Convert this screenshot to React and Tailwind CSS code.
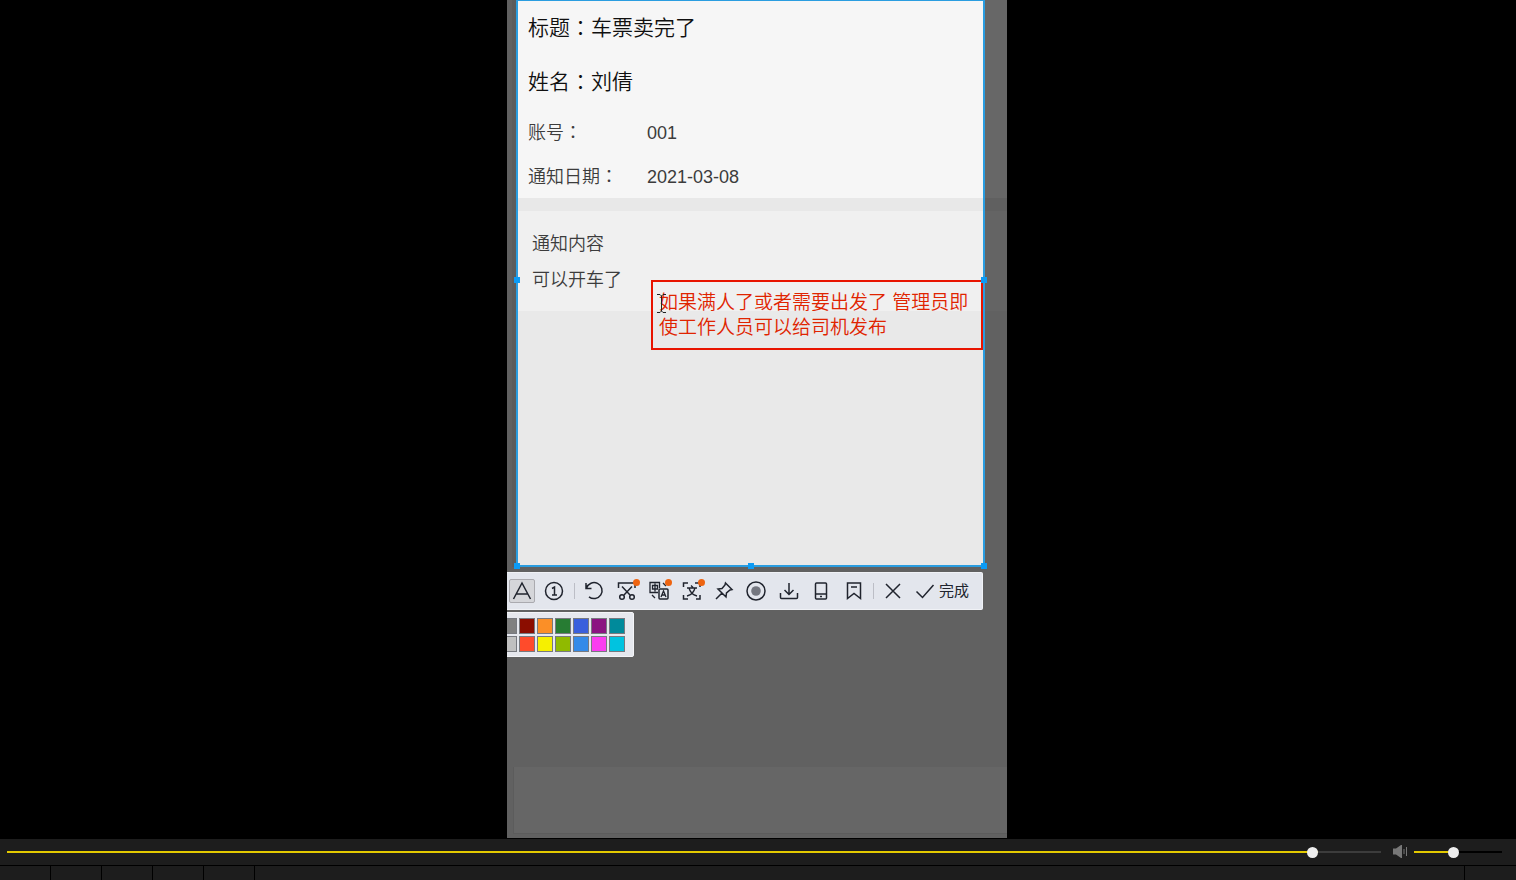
import React, { useState } from 'react';

const SWATCH_ROWS = [
  [
    ['Gray', 'bg-[#808080]'],
    ['Dark red', 'bg-[#8b0d00]'],
    ['Orange', 'bg-[#fb8f27]'],
    ['Green', 'bg-[#277c33]'],
    ['Blue', 'bg-[#3a5fdc]'],
    ['Purple', 'bg-[#8b1481]'],
    ['Teal', 'bg-[#008a9b]'],
  ],
  [
    ['Silver', 'bg-[#c0c0c0]'],
    ['Red', 'bg-[#ff4b2b]'],
    ['Yellow', 'bg-[#f6f000]'],
    ['Lime', 'bg-[#90ba00]'],
    ['Sky', 'bg-[#348ae8]'],
    ['Pink', 'bg-[#fa3df0]'],
    ['Cyan', 'bg-[#00c3e0]'],
  ],
];

const Icon = ({ children }) => (
  <svg
    width="20"
    height="20"
    viewBox="0 0 20 20"
    fill="none"
    stroke="#20242e"
    strokeWidth="1.5"
    aria-hidden="true"
  >
    {children}
  </svg>
);

const IconText = () => (
  <Icon>
    <path d="M1.5 18 10 2l8.500 16M4.500 13h11" />
  </Icon>
);

const IconNumber = () => (
  <Icon>
    <circle cx="10" cy="10" r="8.5" />
    <path d="M8 7.5 10.5 6v8M8 14h5" />
  </Icon>
);

const IconUndo = () => (
  <Icon>
    <path d="M2 2v5.5h5.5M2.5 7A8 8 0 1 1 5 15.8" />
  </Icon>
);

const IconScissors = () => (
  <Icon>
    <path d="M1.500 7V2H18v5M5 5.500 13 14M15 5.500 7 14" />
    <circle cx="5" cy="16" r="2.3" />
    <circle cx="15" cy="16" r="2.3" />
  </Icon>
);

const IconTranslate = () => (
  <Icon>
    <path d="M9 11.500H1V1.500h9.500V7M3.500 4.500h5v3.500h-5zM6 2.500v8" strokeWidth="1.3" />
    <rect x="10" y="8" width="9" height="10" rx="1" />
    <path d="m12 16 2.500-6 2.500 6M13 14h3M14 2l3 3M3 14l3 3" strokeWidth="1.3" />
  </Icon>
);

const IconRecognize = () => (
  <Icon>
    <path d="M1.500 6V2H6M13 2h5v4M1.500 14v4H6M14 18h4v-4" />
    <path d="M5 7h10M9 4.500l2 2M13 7c-1 4-4 7-8 8M7 7c1 4 4 7 8 8" strokeWidth="1.3" />
  </Icon>
);

const IconPin = () => (
  <Icon>
    <path d="m11.500 2 6.500 6.500-2 .5-3.500 3-.5 4L4 8l4-.500L11 4zM8 12l-6 6" />
  </Icon>
);

const IconRecord = () => (
  <Icon>
    <circle cx="10" cy="10" r="9" />
    <circle cx="10" cy="10" r="4.800" fill="#747780" stroke="none" />
  </Icon>
);

const IconDownload = () => (
  <Icon>
    <path d="M10 2v11.500M5.500 9l4.500 4.500L14.500 9M1.500 12v4.500q0 1 1 1h15q1 0 1-1V12" />
  </Icon>
);

const IconPhone = () => (
  <Icon>
    <rect x="4.500" y="2" width="11" height="16" rx="1" />
    <path d="M4.500 13h11M9 15.500h2" />
  </Icon>
);

const IconBookmark = () => (
  <Icon>
    <path d="M3.500 2h13v15.500L10 12.500l-6.500 5zM7 6h6" />
  </Icon>
);

const IconClose = () => (
  <Icon>
    <path d="m3 3 14 14M17 3 3 17" />
  </Icon>
);

const IconCheck = () => (
  <Icon>
    <path d="m1.500 10.500 6 6L18.500 4" />
  </Icon>
);

const IconVolume = () => (
  <svg width="15" height="14" viewBox="0 0 15 14" fill="#777777" aria-hidden="true">
    <path d="M0 3.500h3L8 0h1v13H8L3 9.500H0zM10.500 4h1v5h-1zM13 2h1v9h-1z" />
  </svg>
);

const ToolButton = ({ label, icon: ToolIcon, active, badge }) => (
  <button
    type="button"
    aria-label={label}
    className={
      active
        ? 'relative flex h-6 w-[26px] items-center justify-center rounded-xs border border-[#aaaaaf] bg-[#d5d6da]'
        : 'relative flex h-6 w-[26px] items-center justify-center'
    }
  >
    <ToolIcon />
    {badge && <span className="absolute right-0 top-0 size-[7px] rounded-full bg-[#ee6410]" />}
  </button>
);

const Divider = () => <span className="h-4 w-px bg-[#bcbec6]" />;

const Handle = ({ className }) => (
  <span className={`absolute size-1.5 bg-[#0c9bf5] ${className}`} />
);

// Full-width colon that sits in the middle of its cell
const Colon = () => <span className="font-['Noto_Sans_CJK_TC',sans-serif] leading-none">：</span>;

const Slider = ({ label, value, onChange, className, rest }) => (
  <input
    type="range"
    aria-label={label}
    min="0"
    max="1000"
    value={value}
    onChange={(e) => onChange(Number(e.target.value))}
    style={{
      backgroundImage: `linear-gradient(to right, #e3c900 ${value / 10}%, ${rest} ${value / 10}%)`,
    }}
    className={`h-[2px] cursor-pointer appearance-none [&::-webkit-slider-thumb]:size-[11px] [&::-webkit-slider-thumb]:appearance-none [&::-webkit-slider-thumb]:rounded-full [&::-webkit-slider-thumb]:bg-[#eeeeee] ${className}`}
  />
);

const Notice = () => (
  <div className="flex min-w-0 flex-1 flex-col text-lg/6 font-[350] text-[#3c3c3c]">
    <div className="h-[197px] bg-[#f6f6f6] px-2.5 pt-3">
      <h1 className="text-[21px]/[30px] font-[350] text-[#101010]">
        标题<Colon />车票卖完了
      </h1>
      <h2 className="mt-6 text-[21px]/[30px] font-[350] text-[#101010]">
        姓名<Colon />刘倩
      </h2>
      <dl className="mt-6 grid grid-cols-[119px_1fr] gap-y-5">
        <dt>账号<Colon /></dt>
        <dd>001</dd>
        <dt>通知日期<Colon /></dt>
        <dd>2021-03-08</dd>
      </dl>
    </div>
    <div className="h-[13px] bg-[#e8e8e8]" />
    <div className="h-[100px] bg-[#f0f0f0] px-3.5 pt-[21px]">
      <p>通知内容</p>
      <p className="mt-3">可以开车了</p>
    </div>
    <div className="flex-1 bg-[#e9e9e9]" />
  </div>
);

const Annotation = () => (
  <div className="absolute right-0 top-[279px] h-[70px] w-[332px] border-2 border-[#e81400]">
    <textarea
      aria-label="Annotation"
      spellCheck="false"
      defaultValue="如果满人了或者需要出发了 管理员即使工作人员可以给司机发布"
      className="block size-full resize-none overflow-hidden bg-transparent pl-1.5 pt-2 text-[19px]/[25px] font-[350] text-[#e02400] outline-none"
    />
    <svg
      className="absolute left-1 top-3"
      width="9"
      height="19"
      viewBox="0 0 9 19"
      fill="none"
      stroke="#222222"
      aria-hidden="true"
    >
      <path d="M0 .5h3l1.500 1.500L6 .5h3M4.500 2v15M0 18.500h3L4.500 17 6 18.500h3" />
    </svg>
  </div>
);

const Selection = () => (
  <div className="relative flex min-w-0 flex-1 border-2 border-t border-[#2a9de0]">
    <Notice />
    <Annotation />
    <Handle className="-left-1 top-[276px]" />
    <Handle className="-right-1 top-[276px]" />
    <Handle className="-bottom-1 -left-1" />
    <Handle className="-bottom-1 left-1/2 -ml-[3px]" />
    <Handle className="-bottom-1 -right-1" />
  </div>
);

const Toolbar = () => (
  <div
    role="toolbar"
    className="mr-6 flex h-[38px] items-center justify-between rounded-r-xs border border-l-0 border-[#f0f2f6] bg-[#e3e6ed] pl-0.5 pr-[13px]"
  >
    <ToolButton label="Text" icon={IconText} active />
    <ToolButton label="Number" icon={IconNumber} />
    <Divider />
    <ToolButton label="Undo" icon={IconUndo} />
    <ToolButton label="Cut out" icon={IconScissors} badge />
    <ToolButton label="Translate" icon={IconTranslate} badge />
    <ToolButton label="Recognize text" icon={IconRecognize} badge />
    <ToolButton label="Pin" icon={IconPin} />
    <ToolButton label="Record" icon={IconRecord} />
    <ToolButton label="Save" icon={IconDownload} />
    <ToolButton label="Send to phone" icon={IconPhone} />
    <ToolButton label="Bookmark" icon={IconBookmark} />
    <Divider />
    <ToolButton label="Close" icon={IconClose} />
    <button type="button" className="flex items-center gap-1 pl-0.5 text-[15px]/5 text-[#20242e]">
      <IconCheck />
      完成
    </button>
  </div>
);

const Palette = () => (
  <div className="-ml-2 mt-0.5 flex h-[45px] w-fit flex-col justify-center gap-0.5 rounded-xs border border-[#f4f5f8] bg-[#e6e8ee] pl-px pr-2">
    {SWATCH_ROWS.map((row, i) => (
      <div key={i} className="flex gap-0.5">
        {row.map(([name, color]) => (
          <button
            key={name}
            type="button"
            aria-label={name}
            className={`size-4 border border-[#77797f] ${color}`}
          />
        ))}
      </div>
    ))}
  </div>
);

const App = () => {
  const [progress, setProgress] = useState(954);
  const [volume, setVolume] = useState(436);

  return (
    <div className="flex min-h-screen flex-col bg-black font-['Liberation_Sans','Noto_Sans_CJK_SC',sans-serif]">
      <main className="flex flex-1 justify-center pr-0.5">
        <div className="flex w-full max-w-[500px] flex-col overflow-hidden bg-[#616161]">
          {/* Captured area with the dimmed page on both sides */}
          <div className="flex flex-1">
            <div className="w-[9px] border-r-4 border-[#5c5c5c]" />
            <Selection />
            <div className="flex w-[22px] flex-col">
              <div className="h-[198px] bg-[#676767]" />
              <div className="h-[13px] bg-[#606060]" />
              <div className="h-[100px] bg-[#646464]" />
              <div className="flex-1" />
            </div>
          </div>
          <div className="h-[5px]" />
          <Toolbar />
          <Palette />
          <div className="h-[110px]" />
          <div className="mb-1 ml-1.5 h-[67px] border-b border-l border-[#5c5c5c] bg-[#666666]" />
        </div>
      </main>

      <footer className="mt-px bg-[#1d1d1d]">
        <div className="flex h-[27px] items-center border-b border-black pl-[7px] pr-3.5">
          <Slider
            label="Progress"
            value={progress}
            onChange={setProgress}
            rest="#3c3c3c"
            className="min-w-0 flex-1"
          />
          <div className="ml-3 mr-1.5">
            <IconVolume />
          </div>
          <Slider
            label="Volume"
            value={volume}
            onChange={setVolume}
            rest="#000000"
            className="w-[88px]"
          />
        </div>
        <div className="flex h-3.5">
          {[0, 1, 2, 3, 4].map((tab) => (
            <div key={tab} className="w-[51px] border-r border-black" />
          ))}
          <div className="flex-1 border-r border-black" />
          <div className="w-[51px]" />
        </div>
      </footer>
    </div>
  );
};

export default App;
